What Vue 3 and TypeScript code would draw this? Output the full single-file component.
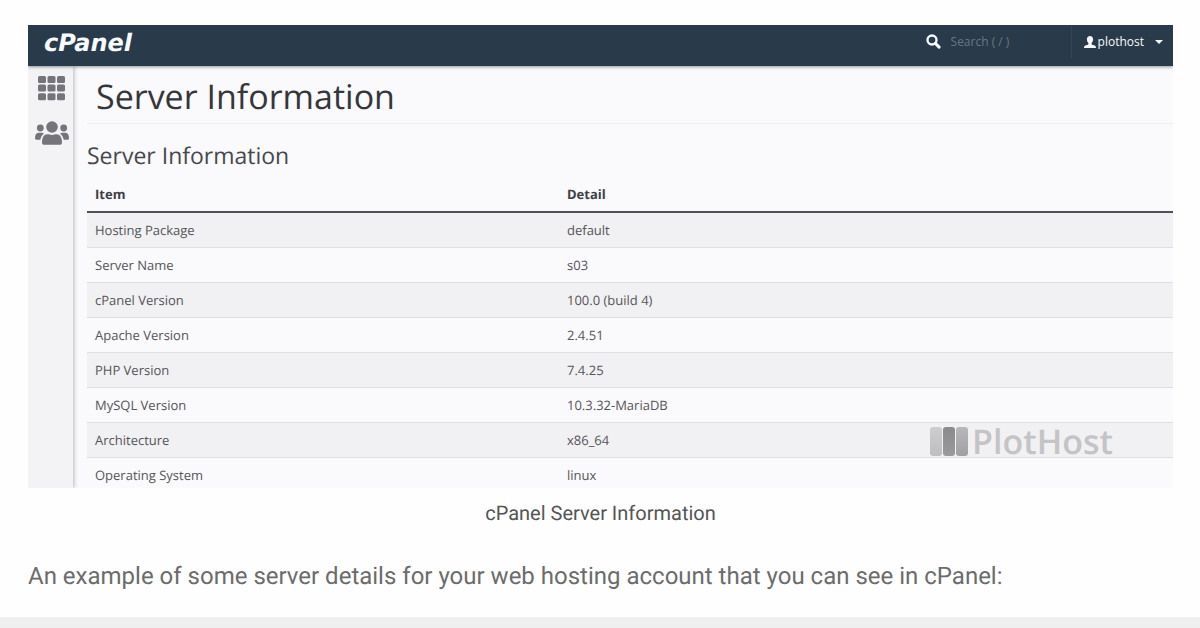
<script setup lang="ts">
interface ServerItem {
  item: string
  detail: string
}

const rows: ServerItem[] = [
  { item: 'Hosting Package', detail: 'default' },
  { item: 'Server Name', detail: 's03' },
  { item: 'cPanel Version', detail: '100.0 (build 4)' },
  { item: 'Apache Version', detail: '2.4.51' },
  { item: 'PHP Version', detail: '7.4.25' },
  { item: 'MySQL Version', detail: '10.3.32-MariaDB' },
  { item: 'Architecture', detail: 'x86_64' },
  { item: 'Operating System', detail: 'linux' },
]

const gridSteps: number[] = [0, 1, 2]
</script>

<template>
  <main class="article">
    <figure class="figure">
      <div class="panel">
        <header class="topbar">
          <a class="logo" href="#">cPanel</a>
          <div class="search">
            <svg class="search-icon" viewBox="0 0 14 14" aria-hidden="true">
              <circle cx="5.6" cy="5.6" r="4.2" fill="none" stroke="currentColor" stroke-width="2.2" />
              <path d="M8.8 8.8 12.2 12.2" stroke="currentColor" stroke-width="2.8" stroke-linecap="round" />
            </svg>
            <input class="search-input" type="text" placeholder="Search ( / )" aria-label="Search" />
          </div>
          <button class="user" type="button">
            <svg class="user-icon" viewBox="0 0 12 12" aria-hidden="true">
              <path
                fill="currentColor"
                d="M6 0C4.1 0 2.900 1.300 2.900 3.200c0 1.500.7 3 1.500 3.700v1C4.300 8.600 3.400 8.900 2.200 9.200.8 9.600 0 10.200 0 12h12c0-1.800-.8-2.400-2.200-2.800C8.600 8.900 7.700 8.600 7.600 7.900v-1c.8-.7 1.500-2.200 1.500-3.700C9.100 1.300 7.900 0 6 0Z"
              />
            </svg>
            <span>plothost</span>
            <svg class="caret" viewBox="0 0 8 4" aria-hidden="true">
              <path fill="currentColor" d="M0 0h8L4 4Z" />
            </svg>
          </button>
        </header>

        <div class="body">
          <nav class="sidebar" aria-label="Main">
            <a class="side-link" href="#" aria-label="Tools">
              <svg class="grid-icon" viewBox="0 0 27 25" aria-hidden="true">
                <template v-for="r in gridSteps" :key="r">
                  <rect
                    v-for="c in gridSteps"
                    :key="c"
                    :x="c * 9.5"
                    :y="r * 8.6"
                    width="8"
                    height="7"
                    rx="1.5"
                    fill="currentColor"
                  />
                </template>
              </svg>
            </a>
            <a class="side-link" href="#" aria-label="User Manager">
              <svg class="users-icon" viewBox="0 0 34 24" aria-hidden="true">
                <g fill="currentColor">
                  <circle cx="17" cy="6" r="5.8" />
                  <circle cx="5.3" cy="7" r="3.4" />
                  <circle cx="28.7" cy="7" r="3.4" />
                  <path d="M7 21.500c0-5 2-8.300 5.500-8.300 1.300 0 2.500.7 4.500.7s3.200-.7 4.500-.7c3.500 0 5.500 3.300 5.500 8.300 0 1.500-1 2.300-2.500 2.300h-15C8 23.800 7 23 7 21.500Z" />
                  <path d="M0 17.500C0 14 1.200 11.800 3.500 11.800h3c1 0 1.900.3 2.500.9-2 1.300-3.200 3.300-3.700 6H1.500C.6 18.700 0 18.300 0 17.500Z" />
                  <path d="M34 17.500c0-3.500-1.200-5.700-3.500-5.700h-3c-1 0-1.900.3-2.500.9 2 1.300 3.200 3.300 3.700 6h3.800c.9 0 1.500-.4 1.500-1.200Z" />
                </g>
              </svg>
            </a>
          </nav>

          <section class="content">
            <h1 class="title">Server Information</h1>
            <h2 class="subtitle">Server Information</h2>
            <table class="table">
              <thead>
                <tr>
                  <th scope="col">Item</th>
                  <th scope="col">Detail</th>
                </tr>
              </thead>
              <tbody>
                <tr v-for="row in rows" :key="row.item">
                  <td>{{ row.item }}</td>
                  <td>{{ row.detail }}</td>
                </tr>
              </tbody>
            </table>
          </section>
        </div>

        <div class="watermark">
          <span class="bar bar-light"></span>
          <span class="bar bar-dark"></span>
          <span class="bar bar-mid"></span>
          <span class="watermark-text">PlotHost</span>
        </div>
      </div>
      <figcaption class="caption">cPanel Server Information</figcaption>
    </figure>
    <p class="text">
      An example of some server details for your web hosting account that you can see in cPanel:
    </p>
    <div class="block"></div>
  </main>
</template>

<style>
body {
  margin: 0;
  background: #fefefe;
}
</style>

<style scoped>
.article {
  box-sizing: border-box;
  min-height: 100vh;
  display: flex;
  flex-direction: column;
  padding-top: 25px;
  font-family: Roboto, sans-serif;
  text-rendering: geometricPrecision;
}

.figure {
  margin: 0 27px 0 28px;
}

.panel {
  position: relative;
  overflow: hidden;
  background: #faf9fb;
  font-family: "Open Sans", sans-serif;
}

.topbar {
  position: relative;
  display: flex;
  height: 41px;
  background: #293a4a;
  box-shadow: 0 1px 3px rgba(40, 50, 65, 0.5);
  color: #f6fafc;
}

.logo {
  margin: 0 auto 0 16px;
  color: #f6fcff;
  font: italic bold 24px/36px "DejaVu Sans", sans-serif;
  text-decoration: none;
}

.search {
  display: flex;
  align-items: center;
  gap: 10px;
  height: 33px;
}

.search-icon {
  width: 15px;
  height: 15px;
}

.search-input {
  width: 120px;
  padding: 0;
  border: 0;
  outline: 0;
  background: transparent;
  color: #f6fafc;
  font: 12px/16px "Open Sans", sans-serif;
}

.search-input::placeholder {
  color: #697783;
  opacity: 1;
}

.user {
  display: flex;
  align-items: center;
  height: 33px;
  padding: 0 10px 0 12px;
  border: 0;
  border-left: 1px solid #34475a;
  background: transparent;
  color: inherit;
  font: 500 12px/16px "Open Sans", sans-serif;
}

.user-icon {
  width: 12px;
  height: 12px;
  margin-right: 2px;
}

.caret {
  width: 8px;
  height: 4px;
  margin-left: 11px;
}

.body {
  display: flex;
}

.sidebar {
  box-sizing: border-box;
  width: 45px;
  flex: none;
  display: flex;
  flex-direction: column;
  align-items: center;
  gap: 20px;
  padding: 10px 0 0 2px;
  background: #f3f2f5;
  box-shadow: 1px 0 4px rgba(60, 60, 75, 0.35);
}

.side-link {
  color: #75747a;
}

.side-link svg {
  display: block;
}

.grid-icon {
  width: 27px;
  height: 25px;
}

.users-icon {
  width: 34px;
  height: 24px;
}

.content {
  flex: 1;
  min-width: 0;
  padding-left: 14px;
}

.title {
  margin: 0;
  padding: 6px 0 3px 9px;
  border-bottom: 1px solid #eeedf0;
  color: #35363a;
  font-size: 34px;
  font-weight: 400;
  line-height: 48px;
}

.subtitle {
  margin: 0;
  padding: 15px 0 6px;
  color: #47484c;
  font-size: 23px;
  font-weight: 400;
  line-height: 32px;
}

.table {
  width: 100%;
  table-layout: fixed;
  border-collapse: separate;
  border-spacing: 0;
  color: #555559;
  font-size: 13px;
  line-height: 18px;
}

th,
td {
  padding: 8px;
  text-align: left;
}

th:first-child {
  width: 456px;
}

th {
  border-bottom: 2px solid #515058;
  color: #404045;
  font-weight: 700;
}

td {
  border-bottom: 1px solid #dfdee2;
}

tbody tr:nth-child(odd) {
  background: #f1f0f2;
}

tbody tr:last-child td {
  padding-bottom: 4px;
  border-bottom: 0;
}

.watermark {
  position: absolute;
  right: 60px;
  bottom: 31px;
  display: flex;
  align-items: center;
  gap: 1px;
  height: 32px;
}

.bar {
  width: 12px;
  height: 29px;
  border-radius: 3px;
}

.bar-light {
  background: linear-gradient(#cdccce, #bebdbf);
}

.bar-dark {
  background: linear-gradient(#8a898b, #9a999b);
}

.bar-mid {
  background: linear-gradient(#b8b7b9, #a09fa1);
}

.watermark-text {
  margin-left: 3px;
  color: #c4c3c6;
  font-size: 34px;
  font-weight: 600;
  line-height: 32px;
}

.caption {
  padding-top: 13px;
  color: #555;
  font-size: 20px;
  line-height: 24px;
  text-align: center;
}

.text {
  margin: 35px 27px 25px 28px;
  color: #6c6c6c;
  font-size: 24px;
  line-height: 32px;
}

.block {
  flex: 1;
  min-height: 10px;
  background: #efefef;
}
</style>
